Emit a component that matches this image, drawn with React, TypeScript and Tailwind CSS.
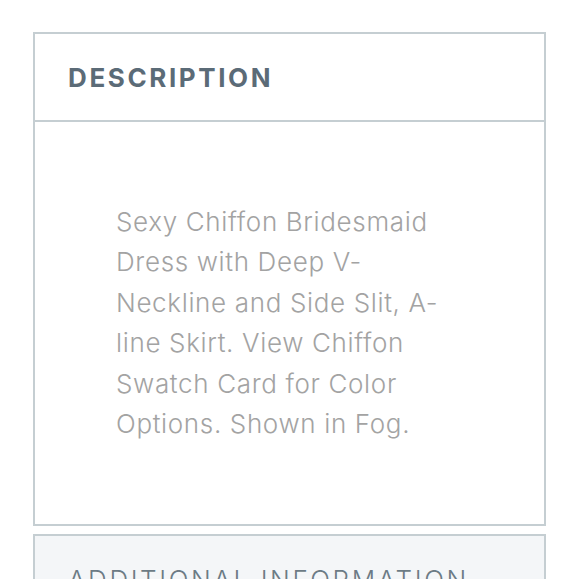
const lines = [
  "Sexy Chiffon Bridesmaid",
  "Dress with Deep V-",
  "Neckline and Side Slit, A-",
  "line Skirt. View Chiffon",
  "Swatch Card for Color",
  "Options. Shown in Fog.",
];

export default function App() {
  return (
    <div className="min-h-[579px] overflow-hidden bg-white pt-[32px] pl-[33px] pr-[34px] font-['Inter','Liberation_Sans',sans-serif]">
      <section className="border-2 border-[#c5ced2] bg-white">
        <header className="flex h-[88px] items-center border-b-2 border-[#c5ced2] pl-[33px] pt-[2px]">
          <h2 className="text-[26px] font-bold uppercase leading-none tracking-[0.1em] text-[#5b6b77]">
            Description
          </h2>
        </header>
        <div className="pt-[80px] pb-[80px] pl-[81px] pr-[40px]">
          <p className="text-[26px] font-light leading-[40.4px] tracking-[0.025em] text-[#a3a3a3]">
            {lines.map((line) => (
              <span key={line} className="block whitespace-nowrap">
                {line}
              </span>
            ))}
          </p>
        </div>
      </section>
      <section className="mt-[8px] h-[60px] border-2 border-b-0 border-[#c5ced2] bg-[#f4f6f8] pl-[33px] pt-[31px]">
        <h2 className="text-[26px] font-light uppercase leading-none tracking-[0.1em] text-[#6c7b85]">
          Additional Information
        </h2>
      </section>
    </div>
  );
}
